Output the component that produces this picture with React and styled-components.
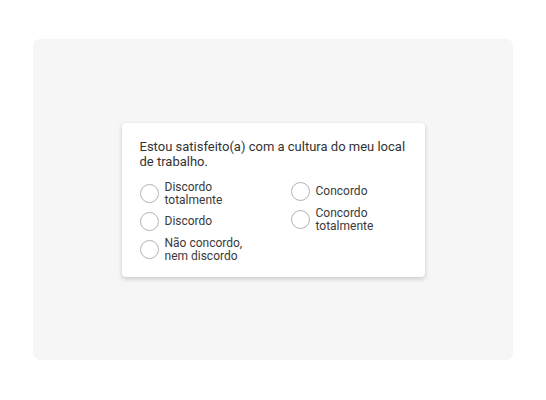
import styled, { createGlobalStyle } from 'styled-components'

const GlobalStyle = createGlobalStyle`
  html, body {
    margin: 0;
    padding: 0;
    background: #fff;
  }
  body {
    font-family: Roboto, "Open Sans", sans-serif;
  }
`

const Page = styled.div`
  width: 546px;
  height: 400px;
  padding: 39px 33px 40px 33px;
  box-sizing: border-box;
`

const Panel = styled.div`
  height: 321px;
  background: #f6f6f6;
  border-radius: 7px;
  display: flex;
  align-items: center;
  justify-content: center;
`

const Card = styled.div`
  width: 303px;
  box-sizing: border-box;
  background: #fff;
  border-radius: 4px;
  box-shadow: 0 2px 5px rgba(0, 0, 0, 0.18), 0 0 1px rgba(0, 0, 0, 0.08);
  padding: 16px 18px 14px 18px;
`

const Question = styled.p`
  margin: 0 0 12px 0;
  font-size: 13px;
  line-height: 15px;
  color: #333;
  white-space: nowrap;
`

const Options = styled.div`
  display: grid;
  grid-template-columns: 151px 1fr;
`

const Column = styled.div`
  display: flex;
  flex-direction: column;
  gap: 5px;
  padding-top: ${(p) => p.$offset || 0}px;
`

const Option = styled.label`
  display: flex;
  align-items: center;
  gap: 6px;
  min-height: 20px;
  cursor: pointer;
`

const Radio = styled.span`
  width: 19px;
  height: 19px;
  flex-shrink: 0;
  border-radius: 50%;
  border: 1px solid #b3b3b3;
  box-sizing: border-box;
  background: #fff;
`

const Label = styled.span`
  font-size: 12px;
  line-height: 13px;
  color: #3a3a3a;
`

const esquerda = [['Discordo', 'totalmente'], ['Discordo'], ['Não concordo,', 'nem discordo']]
const direita = [['Concordo'], ['Concordo', 'totalmente']]

const Coluna = ({ itens, offset }) => (
  <Column $offset={offset}>
    {itens.map((linhas) => (
      <Option key={linhas.join(' ')}>
        <Radio />
        <Label>
          {linhas.map((l, i) => (
            <span key={l}>
              {i > 0 && <br />}
              {l}
            </span>
          ))}
        </Label>
      </Option>
    ))}
  </Column>
)

const App = () => (
  <>
    <GlobalStyle />
    <Page>
      <Panel>
        <Card>
          <Question>
            Estou satisfeito(a) com a cultura do meu local
            <br />
            de trabalho.
          </Question>
          <Options>
            <Coluna itens={esquerda} />
            <Coluna itens={direita} offset={1} />
          </Options>
        </Card>
      </Panel>
    </Page>
  </>
)

export default App
